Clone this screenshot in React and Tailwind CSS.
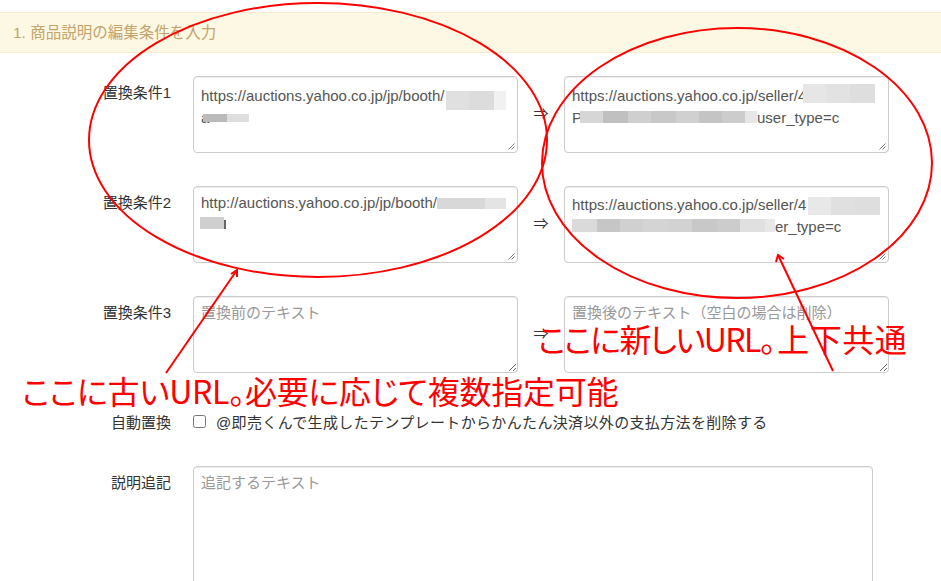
import React from "react";

// blurred parts of the urls, drawn as grey blocks
const Mosaic = ({ segs, h, top = 0, ml = 0 }) => (
  <span
    className="relative inline-flex align-baseline"
    style={{ height: h, top, marginLeft: ml }}
  >
    {segs.map(([w, c], i) => (
      <span key={i} className="inline-block h-full" style={{ width: w, background: c }} />
    ))}
  </span>
);

const Grip = () => (
  <svg className="absolute right-[2px] bottom-[2px]" width="9" height="9" viewBox="0 0 9 9">
    <path d="M8.5 2.5L2.5 8.5M8.5 5.5L5.5 8.5" stroke="#7a7a7a" strokeWidth="1" />
  </svg>
);

const Box = ({ children }) => (
  <div className="relative h-[77px] w-[325px] shrink-0 overflow-hidden whitespace-nowrap rounded-[4px] border border-[#cccccc] bg-white px-[7px] py-[5px] text-[15px] leading-[22px] text-[#555555] shadow-[inset_0_1px_1px_rgba(0,0,0,0.075)]">
    {children}
    <Grip />
  </div>
);

const Label = ({ children }) => (
  <div className="w-[171px] shrink-0 pt-[7px] text-right text-[15px] leading-[20px] text-[#333333]">
    {children}
  </div>
);

const Arrow = () => (
  <div className="flex h-[77px] w-[46px] shrink-0 items-center justify-center text-[15px] text-[#333333]">
    ⇒
  </div>
);

const App = () => {
  return (
    <div className="relative h-[581px] w-[941px] overflow-hidden bg-white pt-[12px] font-['Liberation_Sans','Noto_Sans_CJK_JP',sans-serif]">
      <div className="flex h-[41px] items-center border-y border-[#faebcc] bg-[#fcf8e3] px-[13px] text-[15.5px] text-[#c5a36b]">
        1. 商品説明の編集条件を入力
      </div>

      <div className="mt-[23px] flex flex-col gap-[33px]">
        {/* 置換条件1 */}
        <div className="flex items-start">
          <Label>置換条件1</Label>
          <div className="ml-[22px] flex">
            <Box>
              <div>
                https://auctions.yahoo.co.jp/jp/booth/
                <Mosaic h={19} top={9} ml={1} segs={[[23, "#e0e0e0"], [25, "#dcdcdc"], [12, "#f1f1f1"]]} />
              </div>
              <div>
                a
                <Mosaic h={8} top={-1} ml={-6} segs={[[24, "#bababa"], [22, "#dedede"]]} />
              </div>
            </Box>
            <Arrow />
            <Box>
              <div>
                https://auctions.yahoo.co.jp/seller/4
                <Mosaic h={19} top={2} ml={-3} segs={[[24, "#e6e6e6"], [23, "#e2e2e2"], [25, "#dedede"]]} />
              </div>
              <div>
                P
                <Mosaic
                  h={12}
                  top={0}
                  ml={-2}
                  segs={[[23, "#d6d6d6"], [25, "#c0c0c0"], [23, "#cfcfcf"], [25, "#c8c8c8"], [23, "#d0d0d0"], [23, "#c4c4c4"], [23, "#cccccc"], [12, "#e6e6e6"]]}
                />
                user_type=c
              </div>
            </Box>
          </div>
        </div>

        {/* 置換条件2 */}
        <div className="flex items-start">
          <Label>置換条件2</Label>
          <div className="ml-[22px] flex">
            <Box>
              <div>
                http://auctions.yahoo.co.jp/jp/booth/
                <Mosaic h={11} top={1} segs={[[48, "#d8d8d8"], [21, "#e4e4e4"]]} />
              </div>
              <div>
                <Mosaic h={12} top={-1} ml={-1} segs={[[24, "#cfcfcf"]]} />
                <span className="relative top-[-1px] inline-block h-[9px] w-[2px] bg-[#666666] align-baseline" />
              </div>
            </Box>
            <Arrow />
            <Box>
              <div>
                https://auctions.yahoo.co.jp/seller/4
                <Mosaic h={18} top={5} ml={2} segs={[[23, "#e8e8e8"], [24, "#e0e0e0"], [25, "#dedede"]]} />
              </div>
              <div>
                <Mosaic
                  h={13}
                  top={0}
                  segs={[[25, "#dadada"], [23, "#c6c6c6"], [23, "#d0d0d0"], [25, "#d4d4d4"], [24, "#d2d2d2"], [25, "#c8c8c8"], [23, "#cccccc"], [25, "#e0e0e0"], [10, "#e8e8e8"]]}
                />
                er_type=c
              </div>
            </Box>
          </div>
        </div>

        {/* 置換条件3 */}
        <div className="flex items-start">
          <Label>置換条件3</Label>
          <div className="ml-[22px] flex">
            <textarea
              className="h-[77px] w-[325px] shrink-0 rounded-[4px] border border-[#cccccc] px-[7px] py-[5px] text-[15px] leading-[22px] text-[#555555] shadow-[inset_0_1px_1px_rgba(0,0,0,0.075)] outline-none placeholder:text-[#999999]"
              placeholder="置換前のテキスト"
            />
            <Arrow />
            <textarea
              className="h-[77px] w-[325px] shrink-0 rounded-[4px] border border-[#cccccc] px-[7px] py-[5px] text-[15px] leading-[22px] text-[#555555] shadow-[inset_0_1px_1px_rgba(0,0,0,0.075)] outline-none placeholder:text-[#999999]"
              placeholder="置換後のテキスト（空白の場合は削除）"
            />
          </div>
        </div>
      </div>

      {/* 自動置換 */}
      <div className="mt-[40px] flex items-start">
        <div className="w-[171px] shrink-0 text-right text-[15px] leading-[20px] text-[#333333]">自動置換</div>
        <label className="ml-[22px] flex items-start text-[15px] leading-[20px] tracking-[0.35px] text-[#333333]">
          <input type="checkbox" className="m-0 mt-[2px] h-[13px] w-[13px]" />
          <span className="ml-[10px]">@即売くんで生成したテンプレートからかんたん決済以外の支払方法を削除する</span>
        </label>
      </div>

      {/* 説明追記 */}
      <div className="mt-[33px] flex items-start">
        <Label>説明追記</Label>
        <textarea
          className="ml-[22px] h-[140px] w-[680px] shrink-0 rounded-[4px] border border-[#cccccc] px-[7px] py-[5px] text-[15px] leading-[22px] text-[#555555] shadow-[inset_0_1px_1px_rgba(0,0,0,0.075)] outline-none placeholder:text-[#999999]"
          placeholder="追記するテキスト"
        />
      </div>

      {/* red annotations drawn over the form */}
      <svg className="pointer-events-none absolute inset-0" width="941" height="581" viewBox="0 0 941 581">
        <g fill="none" stroke="#ff0000" strokeWidth="2">
          <ellipse cx="318" cy="140" rx="229" ry="137" />
          <ellipse cx="737" cy="163" rx="195" ry="135" />
          <path d="M237 270L166 373" />
          <path d="M231 274L237 270L237 277" />
          <path d="M778 255L833 371" />
          <path d="M776 262L778 255L784 259" />
        </g>
      </svg>
      <div className="pointer-events-none absolute left-[22px] top-[374px] whitespace-nowrap font-['Noto_Sans_CJK_JP',sans-serif] text-[32px] leading-none tracking-[-0.25px] text-[#ff0000] [font-feature-settings:'palt']">
        ここに古いURL。必要に応じて複数指定可能
      </div>
      <div className="pointer-events-none absolute left-[538px] top-[322px] flex whitespace-nowrap font-['Noto_Sans_CJK_JP',sans-serif] text-[32px] leading-none text-[#ff0000] [font-feature-settings:'palt']">
        <span className="tracking-[-1.6px]">ここに新しいURL。</span>
        <span className="ml-[3px] tracking-[0.5px]">上下共通</span>
      </div>
    </div>
  );
};

export default App;
